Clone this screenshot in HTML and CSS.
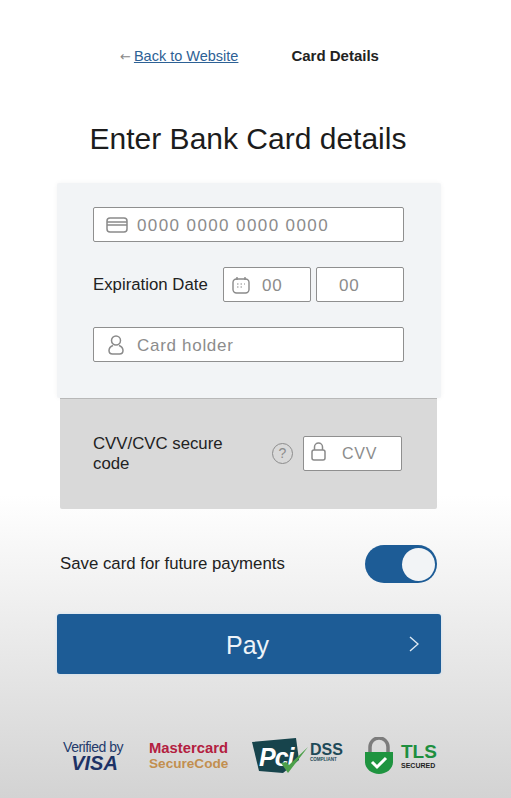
FILE: index.html
```html
<!DOCTYPE html>
<html lang="en">
<head>
    <meta charset="UTF-8">
    <meta name="viewport" content="width=device-width, initial-scale=1.0">
    <title>Card Details</title>
    <link rel="stylesheet" href="styles.css">
</head>
<body>
    <div class="page">
        <nav class="topnav">
            <span class="back"><span class="back-arrow">←</span><a href="#">Back to Website</a></span>
            <strong>Card Details</strong>
        </nav>

        <h1>Enter Bank Card details</h1>

        <div class="card-panel">
            <div class="field">
                <svg class="icon" width="22" height="16" viewBox="0 0 22 16" fill="none" stroke="#8a8a8a" stroke-width="1.5">
                    <rect x="1" y="1" width="20" height="14" rx="3"/>
                    <path d="M1 5h20M1 8h20"/>
                </svg>
                <span class="hint number">0000 0000 0000 0000</span>
            </div>
            <div class="date-row">
                <span class="label">Expiration Date</span>
                <div class="field month">
                    <svg class="icon" width="20" height="18" viewBox="0 0 20 18" fill="none" stroke="#8a8a8a" stroke-width="1.4">
                        <rect x="2" y="3" width="16" height="14" rx="3.5"/>
                        <path d="M6 1v3M14 1v3"/>
                        <path d="M6 8h1.5M9.5 8H11M13 8h1M6 11h1.5M9.5 11H11" stroke-width="1.2"/>
                    </svg>
                    <span class="hint">00</span>
                </div>
                <div class="field year"><span class="hint">00</span></div>
            </div>
            <div class="field">
                <svg class="icon person" width="16" height="20" viewBox="0 0 16 20" fill="none" stroke="#8a8a8a" stroke-width="1.5">
                    <circle cx="8" cy="5.5" r="4.5"/>
                    <path d="M5 10.5C2.5 11.5 1 13 1 15.500C1 18 2.500 19 4.500 19h7c2 0 3.500-1 3.500-3.500 0-2.500-1.500-4-4-5"/>
                </svg>
                <span class="hint">Card holder</span>
            </div>
        </div>

        <div class="cvv-panel">
            <span class="label cvv-label">CVV/CVC secure code</span>
            <span class="help">?</span>
            <div class="field cvv-field">
                <svg class="icon" width="15" height="19" viewBox="0 0 15 19" fill="none" stroke="#8a8a8a" stroke-width="1.5">
                    <rect x="1" y="8" width="13" height="10" rx="2"/>
                    <path d="M3.500 8V5a4 4 0 0 1 8 0v3"/>
                </svg>
                <span class="hint">CVV</span>
            </div>
        </div>

        <div class="save-row">
            <span class="label">Save card for future payments</span>
            <div class="toggle"><span class="knob"></span></div>
        </div>

        <a class="pay" href="#">
            <span>Pay</span>
            <svg class="chevron" width="10" height="16" viewBox="0 0 10 16" fill="none" stroke="#dfeaf4" stroke-width="1.400">
                <path d="M1 1l8 7-8 7"/>
            </svg>
        </a>

        <div class="badges">
            <div class="visa"><span>Verified by</span><b>VISA</b></div>
            <div class="mc"><span>Mastercard</span><span class="mc-sub">SecureCode</span></div>
            <div class="pci">
                <svg class="pci-flag" width="48" height="36" viewBox="0 0 48 36">
                    <path d="M0 4L44 0 47 22 31 35 7 33z" fill="#17444c"/>
                </svg>
                <span class="pci-text">Pci</span>
                <svg class="pci-check" width="30" height="28" viewBox="0 0 30 28">
                    <path d="M2 17l7 10L29 1 10 19l-3-3z" fill="#4da04a"/>
                </svg>
                <div class="dss"><b>DSS</b><span>COMPLIANT</span></div>
            </div>
            <div class="tls">
                <svg width="30" height="38" viewBox="0 0 30 38">
                    <path d="M6 17V10a9 9 0 0 1 18 0v7" fill="none" stroke="#7c7c7c" stroke-width="3.500"/>
                    <path d="M1 15h28v10c0 7-7 12-14 12S1 32 1 25z" fill="#1f9440"/>
                    <path d="M8 25l5 5 9-9" fill="none" stroke="#fff" stroke-width="3"/>
                </svg>
                <div class="tls-text"><b>TLS</b><span>SECURED</span></div>
            </div>
        </div>
    </div>
</body>
</html>
```

FILE: styles.css
```css
* {
    box-sizing: border-box;
}

html, body {
    height: 100%;
}

body {
    margin: 0;
    font-family: "Liberation Sans", Arial, sans-serif;
    color: #222;
    background: linear-gradient(180deg, #fff 0, #fff 495px, #d3d3d3 798px);
}

.page {
    height: 798px;
    overflow: hidden;
    padding: 46px 70px 0 57px;
    width: 511px;
}

.topnav {
    display: flex;
    gap: 53px;
    height: 18px;
    margin-left: 63px;
    align-items: center;
    font-size: 15px;
}

.topnav strong {
    color: #222;
}

.back {
    color: #888;
}

.back-arrow {
    font-size: 13px;
    font-family: "DejaVu Sans", sans-serif;
    margin-right: 3px;
}

.back a {
    color: #2d6195;
    font-size: 14.500px;
}

h1 {
    margin: 57px 0 0;
    padding-right: 2px;
    font-size: 30px;
    font-weight: 400;
    line-height: 36px;
    text-align: center;
    width: 384px;
    color: #1c1c1c;
}

.card-panel {
    margin-top: 26px;
    width: 384px;
    height: 215px;
    padding: 24px 37px 0 36px;
    background: #f2f4f6;
    box-shadow: 0 0 5px rgba(0,0,0,0.05);
    border-radius: 2px;
}

.field {
    display: flex;
    align-items: center;
    height: 35px;
    background: #fff;
    border: 1px solid #8f8f8f;
    border-radius: 2px;
    padding-left: 12px;
    margin-bottom: 25px;
}

.icon {
    flex-shrink: 0;
    margin-right: 9px;
}

.person {
    margin: 0 13px 0 2px;
}

.hint {
    color: #8c8c8c;
    font-size: 17px;
    letter-spacing: 0.700px;
    padding-top: 2px;
}

.number {
    letter-spacing: 1.400px;
}

.label {
    font-size: 16.800px;
    color: #222;
}

.date-row {
    display: flex;
    align-items: flex-start;
    height: 35px;
    margin-bottom: 25px;
}

.date-row .label {
    line-height: 35px;
    width: 130px;
    flex-shrink: 0;
}

.date-row .field {
    margin: 0;
}

.month {
    width: 88px;
    padding-left: 7px;
}

.month .icon {
    margin-right: 11px;
}

.year {
    width: 88px;
    margin-left: 5px !important;
    padding-left: 22px;
}

.cvv-panel {
    display: flex;
    align-items: center;
    width: 377px;
    height: 111px;
    margin-left: 3px;
    padding: 0 35px 0 33px;
    background: #d9d9d9;
    border-top: 1px solid #b8b8b8;
    border-radius: 0 0 2px 2px;
}

.cvv-label {
    width: 150px;
    line-height: 20px;
}

.help {
    width: 21px;
    height: 21px;
    margin-left: 29px;
    margin-top: -1px;
    border: 1.500px solid #8c8c8c;
    border-radius: 50%;
    color: #8c8c8c;
    font-size: 14px;
    line-height: 18px;
    text-align: center;
}

.cvv-field {
    width: 99px;
    margin: -2px 0 0 10px;
    padding-left: 7px;
}

.cvv-field .icon {
    margin: -3px 16px 0 0;
}

.cvv-field .hint {
    font-size: 16px;
}

.save-row {
    display: flex;
    justify-content: space-between;
    align-items: center;
    margin: 36px 0 0 3px;
    width: 377px;
    height: 38px;
}

.toggle {
    display: flex;
    justify-content: flex-end;
    align-items: center;
    width: 72px;
    height: 38px;
    padding-right: 2px;
    background: #1d5c96;
    border-radius: 19px;
}

.knob {
    width: 33px;
    height: 33px;
    background: #f2f4f6;
    border-radius: 50%;
}

.pay {
    position: relative;
    display: block;
    margin-top: 31px;
    width: 384px;
    height: 60px;
    background: #1d5c96;
    border-radius: 3px;
    box-shadow: 0 0 3px rgba(190,220,245,0.800);
    color: #eef3f8;
    font-size: 25px;
    line-height: 62px;
    text-align: center;
    text-decoration: none;
    padding-right: 3px;
}

.chevron {
    position: absolute;
    right: 22px;
    top: 22px;
}

.badges {
    display: flex;
    align-items: center;
    height: 40px;
    margin-top: 62px;
    margin-left: 5px;
}

.visa {
    display: flex;
    flex-direction: column;
    align-items: center;
    width: 62px;
    color: #243a6b;
    font-size: 14px;
    line-height: 14px;
    letter-spacing: -0.500px;
}

.visa b {
    padding-left: 3px;
    font-size: 20px;
    font-style: italic;
    line-height: 19px;
    letter-spacing: 0;
    color: #1d3266;
}

.mc {
    display: flex;
    flex-direction: column;
    margin-left: 25px;
    width: 103px;
    color: #b3203f;
    font-size: 14.800px;
    font-weight: 700;
    line-height: 16px;
}

.mc-sub {
    color: #c28f4f;
    font-size: 13.600px;
}

.pci {
    position: relative;
    display: flex;
    align-items: center;
    width: 112px;
}

.pci-text {
    position: absolute;
    left: 7px;
    top: 6px;
    color: #fff;
    font-size: 25px;
    font-weight: 700;
    font-style: italic;
    line-height: 26px;
    letter-spacing: -1px;
}

.pci-check {
    position: absolute;
    left: 27px;
    top: 8px;
}

.dss {
    display: flex;
    flex-direction: column;
    color: #1f4a58;
    margin-left: 10px;
    margin-top: -8px;
}

.dss b {
    font-size: 16px;
    line-height: 15px;
}

.dss span {
    font-size: 4.500px;
    line-height: 6px;
    font-weight: 700;
}

.tls {
    display: flex;
    align-items: center;
    gap: 7px;
}

.tls-text {
    display: flex;
    flex-direction: column;
    color: #1e8f3f;
}

.tls-text b {
    font-size: 19px;
    line-height: 19px;
}

.tls-text span {
    font-size: 7px;
    line-height: 9px;
    font-weight: 700;
    color: #222;
}
```
